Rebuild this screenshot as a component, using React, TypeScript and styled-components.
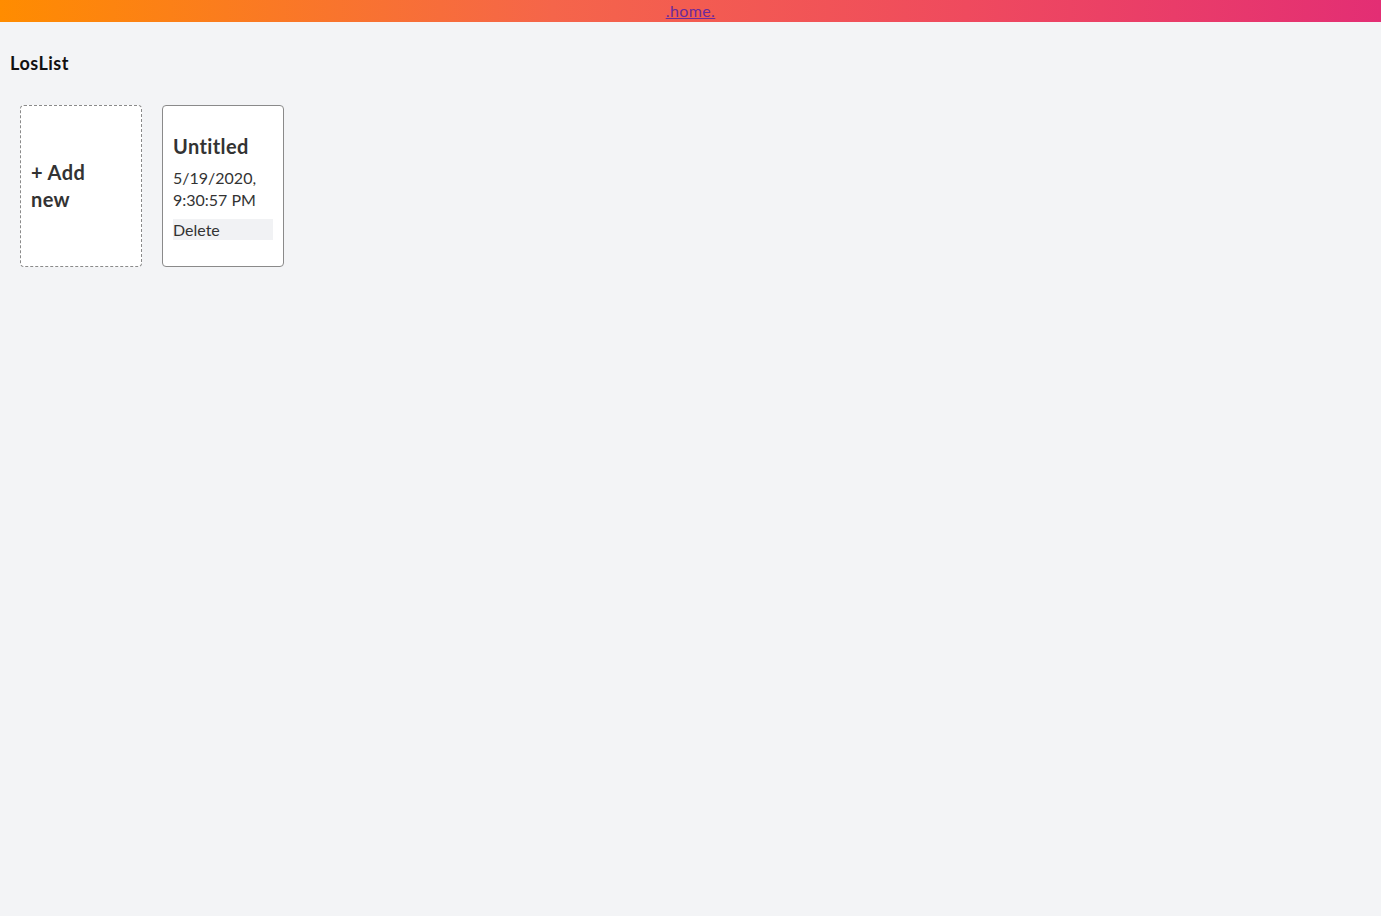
import React from "react";
import styled, { createGlobalStyle } from "styled-components";

const Global = createGlobalStyle`
  html, body {
    margin: 0;
    padding: 0;
    background: #f3f4f6;
    font-family: Lato, "Open Sans", sans-serif;
  }
`;

const TopBar = styled.nav`
  height: 22px;
  display: flex;
  justify-content: center;
  align-items: center;
  background: linear-gradient(90deg, #ff8c00 0%, #f5654a 40%, #ef4a5e 70%, #e32e74 100%);
`;

const HomeLink = styled.a`
  color: #6b2a9c;
  font-size: 16px;
  line-height: 22px;
  letter-spacing: 0.4px;
  text-decoration: underline;
`;

const Page = styled.main`
  padding: 30px 10px 0;
`;

const Title = styled.h1`
  margin: 0;
  font-size: 18px;
  line-height: 22px;
  font-weight: 700;
  letter-spacing: 0.5px;
  color: #111;
`;

const Grid = styled.div`
  display: flex;
  gap: 20px;
  padding: 31px 10px;
`;

const Card = styled.div<{ $dashed?: boolean }>`
  box-sizing: border-box;
  width: 122px;
  height: 162px;
  padding: 10px;
  background: #fff;
  border: 1px ${(p) => (p.$dashed ? "dashed" : "solid")} #8a8a8a;
  border-radius: 4px;
  display: flex;
  flex-direction: column;
  justify-content: center;
  color: #333;
`;

const CardTitle = styled.div<{ $narrow?: boolean }>`
  max-width: ${(p) => (p.$narrow ? "80px" : "none")};
  font-size: 20px;
  line-height: 27px;
  font-weight: 700;
  letter-spacing: 0.4px;
  color: #333;
`;

const DateText = styled.div`
  margin-top: 7px;
  font-size: 16px;
  line-height: 22px;
  color: #333;
`;

const DeleteButton = styled.button`
  margin-top: 8px;
  width: 100%;
  height: 21px;
  padding: 0;
  border: none;
  background: #f1f2f4;
  text-align: left;
  font-family: inherit;
  font-size: 16px;
  line-height: 21px;
  color: #333;
`;

export default function App() {
  return (
    <>
      <Global />
      <TopBar>
        <HomeLink href="#">.home.</HomeLink>
      </TopBar>
      <Page>
        <Title>LosList</Title>
        <Grid>
          <Card $dashed>
            <CardTitle $narrow>+ Add new</CardTitle>
          </Card>
          <Card>
            <CardTitle>Untitled</CardTitle>
            <DateText>5/19/2020, 9:30:57 PM</DateText>
            <DeleteButton>Delete</DeleteButton>
          </Card>
        </Grid>
      </Page>
    </>
  );
}
